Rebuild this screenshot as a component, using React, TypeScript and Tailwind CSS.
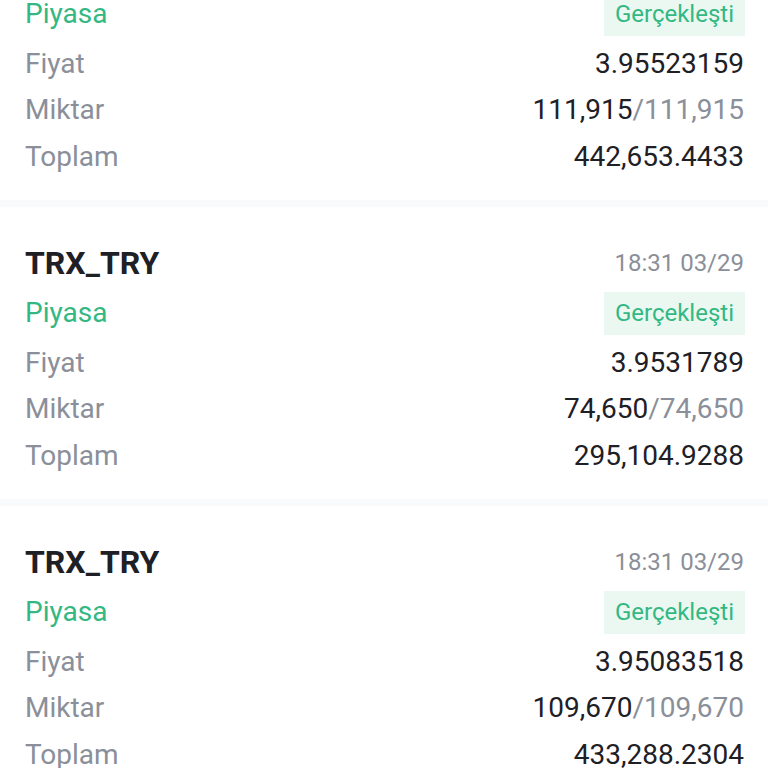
import React from "react";

type Order = {
  pair: string;
  time: string;
  price: string;
  filled: string;
  amount: string;
  total: string;
};

const orders: Order[] = [
  { pair: "TRX_TRY", time: "18:31 03/29", price: "3.95523159", filled: "111,915", amount: "111,915", total: "442,653.4433" },
  { pair: "TRX_TRY", time: "18:31 03/29", price: "3.9531789", filled: "74,650", amount: "74,650", total: "295,104.9288" },
  { pair: "TRX_TRY", time: "18:31 03/29", price: "3.95083518", filled: "109,670", amount: "109,670", total: "433,288.2304" },
];

function Row({ label, children, className = "" }: { label: string; children: React.ReactNode; className?: string }) {
  return (
    <div className={`flex h-[46px] items-center justify-between ${className}`}>
      <span className="text-[28px] text-[#8a8f99]">{label}</span>
      <span className="text-[28px] text-[#1e2026]">{children}</span>
    </div>
  );
}

function OrderCard({ order }: { order: Order }) {
  return (
    <div className="pl-[25px] pr-[24px] pt-[33px] pb-[20px]">
      <div className="flex h-[46px] items-center justify-between">
        <span className="text-[32px] font-bold text-[#1e2026]">{order.pair}</span>
        <span className="text-[24px] text-[#8a8f99]">{order.time}</span>
      </div>
      <div className="mt-[4px] flex h-[46px] items-center justify-between">
        <span className="text-[28px] text-[#33b883]">Piyasa</span>
        <span className="-mr-[1px] flex h-[43px] items-center bg-[#ebf8f1] px-[11px] text-[24px] text-[#33b883]">
          Gerçekleşti
        </span>
      </div>
      <div className="mt-[4px]">
        <Row label="Fiyat">{order.price}</Row>
        <Row label="Miktar">
          {order.filled}
          <span className="text-[#8a8f99]">/{order.amount}</span>
        </Row>
        <Row label="Toplam" className="mt-[1px]">{order.total}</Row>
      </div>
    </div>
  );
}

export default function App() {
  return (
    <div className="h-[768px] overflow-hidden bg-white font-['Roboto',sans-serif]">
      <div className="-mt-[92px]">
        {orders.map((o, i) => (
          <React.Fragment key={i}>
            {i > 0 && <div className="h-[7px] bg-[#f9fafb]" />}
            <OrderCard order={o} />
          </React.Fragment>
        ))}
      </div>
    </div>
  );
}
